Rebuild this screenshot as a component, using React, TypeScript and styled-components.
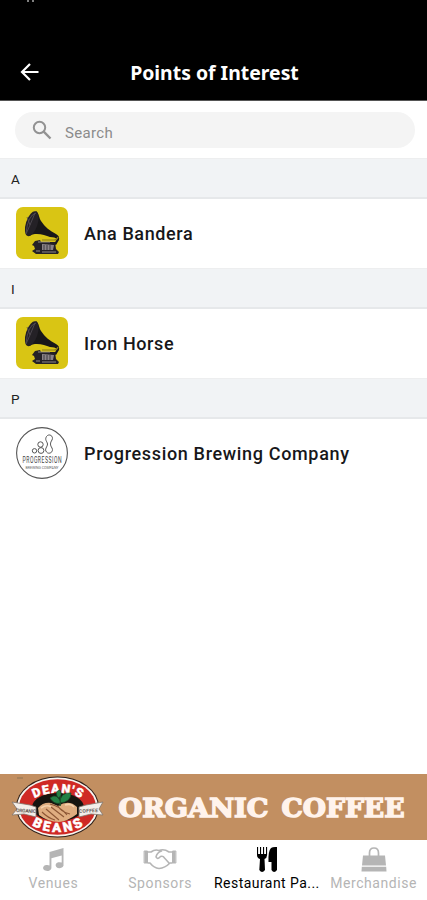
import React from "react";
import styled, { createGlobalStyle } from "styled-components";

const Global = createGlobalStyle`
  * { box-sizing: border-box; }
  body { margin: 0; background: #fff; font-family: Roboto, "Liberation Sans", sans-serif; }
`;

const Screen = styled.div`
  width: 427px;
  height: 900px;
  display: flex;
  flex-direction: column;
  overflow: hidden;
  background: #fff;
`;

const Header = styled.header`
  height: 101px;
  flex: none;
  background: #000;
  border-bottom: 1px solid #555;
  display: flex;
  flex-direction: column;
  justify-content: space-between;
`;

const StatusBar = styled.div`
  height: 3px;
  padding-left: 26px;
  svg { display: block; }
`;

const TitleBar = styled.div`
  height: 56px;
  display: grid;
  grid-template-columns: 60px 1fr 60px;
  align-items: center;
`;

const BackButton = styled.button`
  border: 0;
  padding: 0 0 0 20px;
  background: none;
  svg { display: block; }
`;

const Title = styled.h1`
  margin: 1px 0 0;
  color: #fff;
  text-align: center;
  white-space: nowrap;
  font: 700 20px/28px "Noto Sans", sans-serif;
  transform: scaleX(0.97);
  padding-left: 2px;
`;

const SearchArea = styled.div`
  height: 57px;
  flex: none;
  padding: 11px 12px 10px 15px;
`;

const SearchField = styled.label`
  height: 36px;
  border-radius: 18px;
  background: #f4f4f4;
  display: flex;
  align-items: center;
  gap: 13px;
  padding-left: 17px;
  svg { margin-bottom: 1px; }
`;

const Placeholder = styled.span`
  color: #8b8b8b;
  font-size: 15px;
  line-height: 20px;
  letter-spacing: 0.35px;
  padding-top: 5px;
`;

const SectionHead = styled.h2`
  margin: 0;
  height: 41px;
  flex: none;
  padding: 0 0 0 11px;
  background: #f1f3f5;
  border-top: 1px solid #edeeef;
  border-bottom: 2px solid #e6e8ea;
  color: #222;
  font-size: 13.5px;
  font-weight: 400;
  line-height: 41px;
`;

const Row = styled.div`
  height: 69px;
  flex: none;
  display: flex;
  align-items: center;
  gap: 16px;
  padding: 0 0 1px 16px;
  svg { flex: none; overflow: visible; }
`;

const Name = styled.span<{ $spacing: number }>`
  color: #17171a;
  font-size: 18px;
  font-weight: 500;
  letter-spacing: ${(p) => p.$spacing}px;
  white-space: nowrap;
`;

const Filler = styled.div`
  flex: 1;
`;

const Banner = styled.div`
  height: 66px;
  flex: none;
  background: #c28f61;
  svg { display: block; overflow: visible; }
`;

const Tabs = styled.nav`
  height: 60px;
  flex: none;
  display: grid;
  grid-template-columns: repeat(4, 1fr);
`;

const Tab = styled.div<{ $active?: boolean }>`
  display: flex;
  flex-direction: column;
  align-items: center;
  padding-top: 6px;
  min-width: 0;
  color: ${(p) => (p.$active ? "#000" : "#b5b5b5")};
  svg { display: block; }
`;

const TabLabel = styled.span<{ $spacing: number }>`
  font-size: 14px;
  line-height: 18px;
  white-space: nowrap;
  letter-spacing: ${(p) => p.$spacing}px;
`;

const Gramophone = () => (
  <svg width="52" height="52" viewBox="0 0 52 52">
    <rect width="52" height="52" rx="7" fill="#d9c514" />
    <path d="M20 4 C23 6 23 11 25 14 C29 20 34 24 40 27 Q44 29 43 33 L40 38 L38 37 L41 32 Q39 30 34 30 C28 28 21 25 12 29 Z" fill="#181719" />
    <ellipse cx="15.7" cy="16.7" rx="5.8" ry="13" transform="rotate(18 15.7 16.7)" fill="#242126" />
    <path d="M20 6 Q12 8 10 26 M19 6 L14 18 L10 27 M14 18 L11 10" stroke="#565158" strokeWidth=".8" fill="none" />
    <path d="M26 33 h12 q3 0 4-3" stroke="#8c7d1c" strokeWidth="1.2" fill="none" />
    <path d="M19 34 l5-1 1 2 14 0 1 7 3 3 -1 2 -22 0 -4-3 3-2 -1-3 -2-1z" fill="#242126" />
    <path d="M26 37 l12 1 -1 5 -11 0z" fill="#8b8488" />
    <path d="M28 38 v5 M31 38 v5 M34 38 v5" stroke="#37333a" strokeWidth=".9" />
    <path d="M22 35 h12 M20 44 h4 M26 45 h14" stroke="#9a9290" strokeWidth=".9" />
  </svg>
);

const Progression = () => (
  <svg width="52" height="52" viewBox="0 0 52 52">
    <circle cx="26" cy="26" r="25.4" fill="#fff" stroke="#555" strokeWidth="1.1" />
    <g fill="none" stroke="#555" strokeWidth="1">
      <circle cx="18.5" cy="23.8" r="2.2" />
      <circle cx="24.5" cy="17.5" r="2.7" />
      <circle cx="25" cy="23.5" r="2.9" />
      <path d="M30.5 9.5 C33 6 38 9 36 13 C34 16 34 18 36 21 C38 25 33 28 30.5 25 C28 22 31.5 20 31.5 17 C31 14 28.5 13 30.5 9.5Z" />
    </g>
    <text transform="translate(6.5 36.4) scale(.62 1)" textLength="63" fontFamily="Roboto" fontSize="8.2" fill="#444">PROGRESSION</text>
    <text x="9.5" y="42.2" textLength="33" lengthAdjust="spacingAndGlyphs" fontFamily="Roboto" fontSize="2.8" fill="#666">BREWING COMPANY</text>
  </svg>
);

const CoffeeBanner = () => (
  <svg width="427" height="66" viewBox="0 1 427 66">
    <defs>
      <path id="arcTop" d="M27 32 A33 18.5 0 0 1 89 32" />
      <path id="arcBottom" d="M23 42 A37 25.5 0 0 0 93 42" />
    </defs>
    <path d="M17 5 h6" stroke="#8d7455" />
    <ellipse cx="57.5" cy="34" rx="41.5" ry="30.5" fill="#2f2019" />
    <ellipse cx="57.5" cy="34" rx="40.5" ry="29.5" fill="#f8f3ee" />
    <ellipse cx="57.5" cy="34" rx="38.5" ry="27.8" fill="#cf2925" />
    <ellipse cx="58" cy="34" rx="26" ry="14" fill="#17140f" />
    <path d="M12 29 L30 32 36 34 36 44 24 41 12 42 17 36Z M103 29 L86 32 79 34 79 44 91 41 103 42 99 36Z" fill="#f3eee9" stroke="#80756c" strokeWidth=".8" />
    <text x="16" y="39" textLength="20" fontSize="5" fontWeight="700" fontFamily="Roboto" fill="#6c625d" transform="rotate(3 16 39)">ORGANIC</text>
    <text x="79" y="40" textLength="19" fontSize="5" fontWeight="700" fontFamily="Roboto" fill="#6c625d" transform="rotate(-3 79 40)">COFFEE</text>
    <path d="M38 35 Q43 29 51 30 L58 33 Q69 26 77 34 L77 41 Q68 48 59 49 Q48 49 39 42Z" fill="#dfad80" />
    <path d="M50 31 Q60 33 67 42 M46 36 L59 47 M51 34 L64 44 M58 33 Q61 39 70 41 M42 39 Q48 45 55 47" stroke="#8c5634" strokeWidth="1.1" fill="none" />
    <path d="M41 35 Q47 31 51 34 M65 32 Q71 30 74 34" stroke="#f5d2ad" strokeWidth="1.6" fill="none" />
    <g fontFamily="Roboto" fontWeight="900" fill="#fff" stroke="#fff" strokeWidth=".4" textAnchor="middle">
      <text fontSize="12.5" letterSpacing="1.2"><textPath href="#arcTop" startOffset="50.5%">DEAN'S</textPath></text>
      <text fontSize="13.5" letterSpacing="2.6"><textPath href="#arcBottom" startOffset="51%">BEANS</textPath></text>
    </g>
    <path d="M60 33 Q61 25 59 19" stroke="#24532b" strokeWidth="1.6" fill="none" />
    <path d="M60 17 Q54 18 58 25 Q63 23 60 17Z M50 25 Q57 19 61 30 Q54 32 50 25Z M71 20 Q60 19 60 30 Q71 29 71 20Z" fill="#238145" stroke="#174827" strokeWidth=".7" />
    <g fontFamily="DejaVu Serif" fontWeight="700" fontSize="26" fill="#fff3ec" stroke="#fff3ec" strokeWidth="1.5">
      <text x="118.5" y="43.5" textLength="150" lengthAdjust="spacingAndGlyphs">ORGANIC</text>
      <text x="281.5" y="43.5" textLength="123" lengthAdjust="spacingAndGlyphs">COFFEE</text>
    </g>
  </svg>
);

const Music = () => (
  <svg width="28" height="28" viewBox="0 0 28 28" fill="currentColor">
    <path d="M10.5 6 L24.5 2 V18.5 A4 3 0 1 1 22.7 16.6 V9.5 L12.4 12.2 V22.3 A4.2 3 0 1 1 10.5 19.4Z" />
  </svg>
);

const Handshake = () => (
  <svg width="34" height="28" viewBox="0 0 34 28" fill="none" stroke="currentColor" strokeWidth="1.6" strokeLinejoin="round" strokeLinecap="round">
    <path d="M1.5 5 h3 v12 h-3z M32.5 5 h-3 v12 h3z" fill="currentColor" strokeWidth="1" />
    <path d="M5 6 H8 Q12 3 16 4.5 Q21 2.5 26 6 H29 M5 17 H7 Q11 22 16 22.5 Q22 22 27 17 H29 M18.5 5 Q14 6.5 13 11 Q14.5 14 17.5 10.5 Q20 9.5 21.5 12 L26 17" />
  </svg>
);

const Utensils = () => (
  <svg width="28" height="28" viewBox="0 0 28 28" fill="currentColor">
    <path d="M4 1 h1.1 v7 h1.9 V1 h1.1 v7 H10 V1 h1.1 v7 H13 V1 h1.1 v8 Q14 12 11.5 13 L12 24 Q9 28 6.3 24 L7 13 Q4 12 4 9Z" />
    <path d="M24 1 V24 Q21 28 18.5 24 V16 H15.5 Q15 5 18 2 Q20 .5 24 1Z" />
  </svg>
);

const Bag = () => (
  <svg width="28" height="28" viewBox="0 0 28 28" fill="currentColor">
    <path d="M3 9.5 h22 l1 10 H2Z M1.8 20.7 h24.4 l.3 4.8 H1.5Z" />
    <path d="M9.5 12 V7 Q9.5 2 14 2 Q18.5 2 18.5 7 V12" fill="none" stroke="currentColor" strokeWidth="1.7" />
  </svg>
);

const sections = [
  { letter: "A", name: "Ana Bandera", Logo: Gramophone, spacing: 0.6 },
  { letter: "I", name: "Iron Horse", Logo: Gramophone, spacing: 0.6 },
  { letter: "P", name: "Progression Brewing Company", Logo: Progression, spacing: 0.66 },
];

const tabs = [
  { label: "Venues", Icon: Music, spacing: 0.6 },
  { label: "Sponsors", Icon: Handshake, spacing: 0.6 },
  { label: "Restaurant Pa...", Icon: Utensils, active: true, spacing: 0.45 },
  { label: "Merchandise", Icon: Bag, spacing: 0.55 },
];

export default function App() {
  return (
    <Screen>
      <Global />
      <Header>
        <StatusBar>
          <svg width="8" height="2"><path d="M2 0v2M7 0v2" stroke="#aaa" strokeWidth="1.5" /></svg>
        </StatusBar>
        <TitleBar>
          <BackButton aria-label="Back">
            <svg width="20" height="18" viewBox="0 0 20 18" fill="none" stroke="#fff" strokeWidth="2.2">
              <path d="M18.5 9 H2.5 M10 1 L2 9 L10 17" />
            </svg>
          </BackButton>
          <Title>Points of Interest</Title>
        </TitleBar>
      </Header>
      <SearchArea>
        <SearchField>
          <svg width="20" height="20" viewBox="0 0 20 20" fill="none" stroke="#929292" strokeWidth="2">
            <circle cx="7.5" cy="7.5" r="5.7" />
            <path d="M11.7 11.7 L18.5 18.5" strokeWidth="2.4" />
          </svg>
          <Placeholder>Search</Placeholder>
        </SearchField>
      </SearchArea>
      {sections.map(({ letter, name, Logo, spacing }) => (
        <React.Fragment key={letter}>
          <SectionHead>{letter}</SectionHead>
          <Row>
            <Logo />
            <Name $spacing={spacing}>{name}</Name>
          </Row>
        </React.Fragment>
      ))}
      <Filler />
      <Banner><CoffeeBanner /></Banner>
      <Tabs>
        {tabs.map(({ label, Icon, active, spacing }) => (
          <Tab key={label} $active={active}>
            <Icon />
            <TabLabel $spacing={spacing}>{label}</TabLabel>
          </Tab>
        ))}
      </Tabs>
    </Screen>
  );
}
